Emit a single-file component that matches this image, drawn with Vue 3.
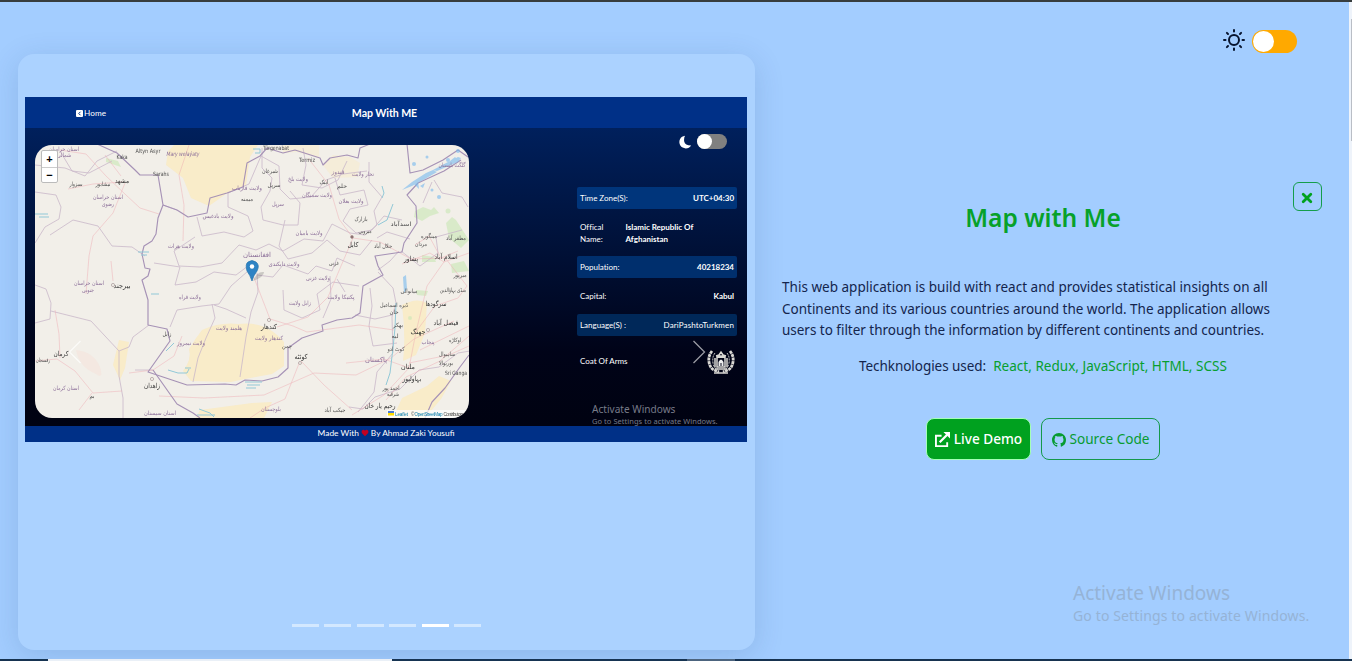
<script setup>
const technologies = 'React, Redux, JavaScript, HTML, SCSS'
const slides = [0, 1, 2, 3, 4, 5]
const activeSlide = 4

const facts = [
  { label: 'Time Zone(S):', value: 'UTC+04:30', kind: 'shade first' },
  { label: 'Offical Name:', value: 'Islamic Republic Of Afghanistan', kind: 'name' },
  { label: 'Population:', value: '40218234', kind: 'shade second' },
  { label: 'Capital:', value: 'Kabul', kind: 'capital' },
  { label: 'Language(S) :', value: 'DariPashtoTurkmen', kind: 'shade third light' },
]

// Map labels: text, centre x, baseline y, width, colour group
const labels = [
  ['استان خراسان', 64, 151, 30, 'p'], ['شمالی', 64, 157, 14, 'p'],
  ['Kaka', 122, 159, 11, 'd'], ['Altyn Asyr', 148, 153, 25, 'd'],
  ['Mary welaýaty', 183, 156, 33, 'p i'], ['Sarahs', 161, 176, 16, 'd'],
  ['سبزوار', 76, 186, 13, 'd'], ['نیشابور', 103, 186, 15, 'd'],
  ['مشهد', 122, 183, 14, 'k'], ['استان خراسان', 108, 199, 30, 'p'],
  ['رضوی', 108, 206, 12, 'p'], ['ولایت بادغیس', 218, 218, 31, 'p'],
  ['ولایت هرات', 181, 248, 26, 'p'], ['Türgenabat', 276, 149.5, 26, 'd'],
  ['Termiz', 307, 162, 16, 'd'], ['شبرغان', 270, 173, 16, 'd'],
  ['ولایت فاریاب', 247, 190, 30, 'p'], ['میمنه', 247, 201, 12, 'd'],
  ['سرپل', 274, 187, 13, 'd'], ['سرپل', 278, 206, 12, 'p'],
  ['ولایت بلخ', 298, 181, 20, 'p'], ['ایبک', 324, 184, 9, 'd'],
  ['خلم', 342, 188, 10, 'd'], ['قندوز', 338, 174, 13, 'p'],
  ['تخار ولایت', 363, 176, 22, 'p'], ['ولایت سمنگان', 317, 197, 30, 'p'],
  ['ولایت بغلان', 351, 203, 25, 'p'], ['بازارک', 361, 221, 13, 'd'],
  ['میرویی', 365, 233, 13, 'd'], ['کابل', 353, 247, 11, 'k'],
  ['جلال آباد', 383, 248, 18, 'd'], ['اسدآباد', 401, 226, 21, 'd'],
  ['ولایت بامیان', 309, 235, 27, 'p'], ['افغانستان', 257, 257, 28, 'p b'],
  ['ولایت دایکندی', 284, 266, 31, 'p'], ['غزنی', 334, 265, 10, 'd'],
  ['مینگوره', 429, 238, 16, 'd'], ['مردان', 421, 246, 12, 'd'],
  ['پشاور', 411, 261, 14, 'k'], ['اسلام آباد', 446, 259, 23, 'k'],
  ['مظفر آباد', 456, 240, 20, 'd'], ['گلگت بلتستان', 452, 167, 27, 'p'],
  ['استان خراسان', 89, 285, 30, 'p'], ['جنوبی', 88, 292, 12, 'p'],
  ['بیرجند', 122, 288, 17, 'k'], ['ولایت فراه', 190, 299, 22, 'p'],
  ['زابل', 167, 336, 9, 'd'], ['ولایت نیمروز', 191, 345, 28, 'p'],
  ['هلمند ولایت', 229, 330, 26, 'p'], ['کندهار', 269, 329, 16, 'k'],
  ['کندهار ولایت', 269, 340, 28, 'p'], ['چمن', 287, 348, 10, 'd'],
  ['کوئٹه', 301, 359, 13, 'k'], ['ولایت غزنی', 318, 280, 24, 'p'],
  ['زابل ولایت', 300, 305, 22, 'p'], ['پکتیکا ولایت', 341, 299, 27, 'p'],
  ['میانوالی', 409, 293, 17, 'd'], ['ڈیره اسماعیل', 394, 307, 28, 'd'],
  ['خان', 394, 314, 9, 'd'], ['بھکر', 398, 327, 10, 'd'],
  ['لیه', 395, 338, 7, 'd'], ['کوٹ ادو', 396, 351, 17, 'd'],
  ['سرگودها', 436, 306, 21, 'k'], ['جھنگ', 418, 334, 15, 'k'],
  ['فیصل آباد', 446, 325, 25, 'k'], ['پنجاب', 428, 344, 13, 'p'],
  ['اوکاڑه', 455, 342, 12, 'd'], ['ساہیوال', 447, 356, 16, 'd'],
  ['بوریوالا', 446, 365, 14, 'd'], ['پاکستان', 376, 362, 22, 'p b'],
  ['ملتان', 408, 369, 14, 'k'], ['بہاولپور', 412, 381, 19, 'k'],
  ['احمد پور', 391, 390, 17, 'd'], ['شرقیه', 393, 396, 12, 'd'],
  ['Sri Ganga', 456, 375, 22, 'd'], ['رحیم یار خان', 380, 408, 31, 'k'],
  ['منڈی بہاؤالدین', 453, 292, 26, 'd'], ['میرپور', 460, 277, 13, 'd'],
  ['کرمان', 61, 356, 15, 'k'], ['رفسنجان', 43, 362, 14, 'd'],
  ['بم', 92, 398, 5, 'd'], ['استان کرمان', 66, 390, 26, 'p'],
  ['زاهدان', 152, 388, 16, 'k'], ['استان سیستان', 160, 415, 32, 'p'],
  ['بلوچستان', 271, 411, 20, 'p'], ['جیکب آباد', 335, 412, 21, 'd'],
]
</script>

<template>
  <div class="page">
    <main class="layout">
      <section class="card">
        <div class="shot">
          <header class="shot-bar">
            <span class="home">
              <svg viewBox="0 0 14 14"><rect width="14" height="14" rx="2" fill="#fff" /><path d="M9 3.500 5.500 7 9 10.500" fill="none" stroke="#003087" stroke-width="2" /></svg>Home
            </span>
            <strong>Map With ME</strong>
          </header>
          <div class="shot-body">
            <svg class="map" viewBox="35 145 434 273">
              <rect x="35" y="145" width="434" height="273" fill="#f2efe9" />
              <g fill="#fbeabd" opacity=".72">
                <path d="M174 145h84l-8 12-4 28-20 9-17 12-18-8-8-20-17-13 2-14z" />
                <path d="M283 145h36v13l-22-6-14 1zM323 165l10-10 17 2 10 6-3 14-24 1z" opacity=".5" />
                <path d="M202 330q18-8 36-6 28-4 46 18v24l-12 8-27 5-14 3-40-1-8-10q9-12 6-22 6-10 13-19z" />
                <path d="M119 340l10 2-4 26-5 12-7-15zM402 305q15-8 25-2l-2 30-9 22-13 6q3-25-1-56zM402 398l25-12 12-10 12 5-10 18-16 19h-32zM200 410l52-7 20-1-8 16h-68z" />
              </g>
              <g fill="#c9e7b5" opacity=".6">
                <path d="m106 158 12 3 3 6-15-5zM415 211l8-4 8 3 3-3 5 6-9 3-8 5-8-4zM422 255l12 2 2 5-14 0zM416 290l12 1-2 5-9-1zM446 223l6-6 4 3 13 20-8 8-12-10zM451 264l13-3 5 10-17 2z" />
                <circle cx="448" cy="211" r="2.500" /><circle cx="410" cy="318" r="2" />
              </g>
              <path d="M76 350q18 2 24 17 4 13-4 7-17-7-20-24z" fill="#f6dfd7" opacity=".45" />
              <g fill="none" stroke="#c9b8c9" stroke-width=".8" stroke-linejoin="round">
                <path d="M35 165l30 3 20 8 12-15 20-10M35 192l21 3 5 12-2 12-14 8-10 16M50 235l23-15 25 6 14 20 20 1 13 9M60 151l12 20 17 2 23-12" />
                <path d="M35 285l11 4 5 14-1 16-15 4M51 311l40 10 28 30 0 25 4 22v20M119 351l10-4 4-10 16-12M135 370l18 0" />
                <path d="M163 205l14 5M197 217l5 19 22-4 20 5 9-6-5-15-20-9v-14l21-9 12-28 18 10 1 23 10 10 21-2 15-17 17-6 24-3" />
                <path d="M262 148l0 20 10 10-2 13-9 16 2 13 20 5 15 0 2-22-10-12M303 148l3 17-4 20 20 3 16-8 9-19M335 178l5 17 24-5 4 15-18 4-7 12 13 12 16-3 12-14 18 4" />
                <path d="M369 162l0 20 13 15-8 14 3 14-12 10-15-2-18-9-9 17-19-2-21 12-14-7-13 6-17-5-17 18-22 4-21-1-5-15 21-14M285 220l-6 26 9 13 24-6 15-13 13 11 20 4 12-15" />
                <path d="M154 263l26 4-5 18 21-3 18-10 22 3 16-12M170 327l7-17 25-4 17-2 12-18 17-15M212 304l3 14-9 20-8 20-5 24M240 377l6-40 5-25 7-20-1-19M246 318l-20-9-12-4M257 275l16 2 10-12 25 9 8-8 16 5 5-13 18 8M283 290l1 20 18 8 18-8-3-16 16-12 26 4M323 318l8-19-1-23M345 292l-8-13M378 270l12-9 9-10M378 272l15 16 3 15-4 14 1 36-16 19-3 20-16 20M370 288l2 18-3 20 4 20 24-3" />
                <path d="M434 180l8 13 20 4 6 10M432 182l-9 21M410 239l-23-7-10 6M401 251l19 15 18-13-2-16 26-7M355 315l20 4 17-4M349 407l14 2 12-12 25-8 19-19 20-3 19-14 12-2" />
              </g>
              <g fill="none" stroke="#eeaab1" stroke-width=".65" opacity=".7">
                <path d="M60 150l26 4 20 22 20 19 14 13 19 6M68 189l25-5 30-2M125 183l-12 30-20 23-4 20-3 38M105 155l16 21M189 145l-10 30 5 30-1 36M35 361l22-2 18 12 18 22 29-2M55 310l4 24 1 24M92 393l-13 17M113 281l-2-20M153 370l21-14 8-20M153 370l-24 3M159 396l45 2 60-3 50-22 42 2 35-17 23-19 40-18M300 361l-15 38-20 9-15 10M301 361l23 24 28 25" />
                <path d="M253 275l17 44 23 7 14 6 52-7 35 5M353 238l-12 28-13 31-20 20-31 10M353 238l27 4 31 17 35-1M353 238l-14-19-10-34-21-27M446 259l-19 27-11 46-7 36-25 27-32 20M446 259l21 27-9 12-23 8-20 27M409 363l40-8 20-9M409 368l-25-9-38 4M420 350l49-24M386 400l20-23 34-16 29-25M402 264l28-11 14 9 25-9M415 245l14-9 12 22 17-7" />
              </g>
              <g fill="none" stroke="#a692b6" stroke-width="1.150" stroke-linejoin="round">
                <path d="M97 144l20 9 18 17 5 5 18 0 2 12 3 18-5 13-2 16-4 7-8 5-2 8 3 14 5 1-2 7-6 4 6 20v25l19 4 3 12-22 31 39 13 38-1 11 1 9-5 17 1 16-4 10-9v-20l14-10 21-7-1-6 15-5 15-2 8-5 3-27 20-11-5-9-3-10 27-4 2-9 13-20-1-17-9-11 11-12 26-12 17-11" />
                <path d="M163 205l14 5 11 7 19-4 3-15 17-5 16-6 4-24 13-7 7-8 16 5 12-3 25 8 3 7 7-7 17-3 11 3 2-10 10-4M407 144l3 29 13-3 20-10 15-10 10 7M153 370l12 17 12 17 16 9 7 5M469 355l-9 12-15 21-13 14-7 16" />
              </g>
              <g fill="none" stroke="#91c8d7" stroke-width="1">
                <path d="M35 214h13M39 217h10M138 252h11M141 255h6M168 370l10 3h9l2-4M185 368h6M245 382h17M247 385h13M246 388h10M199 409l11 4 4 4M197 415h18M396 303l-1 25-2 20-3 25-4 12M382 186l2 7-2 5M378 225l9-5 6-16M151 294h8M174 343l-8 8M253 149h7v4h-5" />
              </g>
              <g fill="#75b8ee" opacity=".6">
                <path d="M402 190l10-8 14-9 7-3 4 2-12 7-13 7zM433 170l15-8 10-5 3 1-3 4-21 9zM414 184l4-3 1 8zM403 277l3-2 1 14-3 4zM420 186l5-3-2 5zM450 161l5-4 2 2z" />
                <circle cx="414" cy="164" r="2" /><circle cx="427" cy="157" r="1.500" /><circle cx="458" cy="151" r="2" /><circle cx="432" cy="190" r="1.500" /><circle cx="439" cy="197" r="2" /><circle cx="448" cy="160" r="2" />
              </g>
              <g class="labels">
                <text v-for="(l, i) in labels" :key="i" :x="l[1]" :y="l[2]" :class="l[4]" :textLength="l[3]" lengthAdjust="spacingAndGlyphs">{{ l[0] }}</text>
              </g>
              <g fill="#f2efe9" stroke="#9b8a8a" stroke-width=".6">
                <circle cx="113" cy="285" r="1.600" /><circle cx="269" cy="320" r="1.600" /><circle cx="152" cy="379" r="1.600" /><circle cx="428" cy="330" r="1.600" /><circle cx="352" cy="237" r="1.400" fill="#8b6969" /><circle cx="300" cy="363" r="1.500" />
              </g>
              <path d="M253 281q4-10 11-9 0 5-11 9z" fill="#555" opacity=".25" />
              <path d="M252 281q-2-6-5-10-2-7 1-9 4-3 8 0 4 3 1 9-4 5-5 10z" fill="#2e83c4" stroke="#2473ac" stroke-width=".7" />
              <circle cx="252" cy="266.500" r="2.200" fill="#fff" />
              <rect x="387" y="410" width="82" height="8" fill="#fff" opacity=".7" />
              <path d="M388 411h6v2h-6z" fill="#4b7bd5" /><path d="M388 413h6v2.500h-6z" fill="#fd0" />
              <g class="credit">
                <text x="395" y="415.500" textLength="13" fill="#0078a8">Leaflet</text>
                <text x="411" y="415.500">©</text>
                <text x="414.500" y="415.500" textLength="28" fill="#0078a8">OpenStreetMap</text>
                <text x="443.500" y="415.500" textLength="20">Contributors</text>
              </g>
            </svg>
            <div class="zoom"><span>+</span><span>−</span></div>
            <aside class="info">
              <div class="night">
                <svg viewBox="0 0 16 16"><path d="M8 .8A7.300 7.300 0 1 0 15 12Q8 12 7 7 6.700 3 8 .8z" fill="#fff" /></svg>
                <span class="mini-switch"><i></i></span>
              </div>
              <div v-for="f in facts" :key="f.label" class="fact" :class="f.kind">
                <span class="key">{{ f.label }}</span><b>{{ f.value }}</b>
              </div>
              <div class="fact arms">
                <span>Coat Of Arms</span>
                <svg viewBox="0 0 28 28" fill="none" stroke="#d9d8d4">
                  <path d="M5 3Q1 8 2 14t5 8l5 2M23 3q4 5 3 11t-5 8l-5 2" stroke-width="2.800" stroke-dasharray="3 .6" />
                  <path d="M8 5Q5 9 6 15t5 6M20 5q3 4 2 10t-5 6" stroke-width="1" stroke-dasharray="2 1" />
                  <path d="M9 8l3-1 2-3 2 3 3 1M10 8v11h8V8zM8 10v9M20 10v9M8 21h12M7 25h14" stroke-width="1.500" />
                  <path d="M11.500 18v-4q2.500-5 5 0v4h-2v-3h-1v3z" fill="#eee" stroke="none" /><path d="M10 9h8" stroke-width="2" />
                </svg>
              </div>
              <div class="mini-mark"><p>Activate Windows</p><small>Go to Settings to activate Windows.</small></div>
            </aside>
          </div>
          <footer class="shot-foot">
            <span>Made With</span>
            <svg viewBox="0 0 10 10"><path d="M5 9 1 5Q0 2 2 1.200 4 .6 5 2.300 6 .6 8 1.200 10 2 9 5z" fill="#c3001f" /></svg>
            <span>By Ahmad Zaki Yousufi</span>
          </footer>
        </div>
        <div class="dots"><span v-for="s in slides" :key="s" :class="{ active: s === activeSlide }"></span></div>
        <svg class="arrow prev" viewBox="0 0 14 24"><path d="M12.500 1 1.500 12l11 11" /></svg>
        <svg class="arrow next" viewBox="0 0 14 24"><path d="m1.500 1 11 11-11 11" /></svg>
      </section>

      <section class="details">
        <div class="theme">
          <svg viewBox="0 0 24 24" fill="none" stroke="#07142f" stroke-width="2"><circle cx="12" cy="12" r="5" /><path stroke-linecap="round" d="M12 2v1.500M12 20.500V22M2 12h1.500M20.500 12H22M4.900 4.900 6 6M18 18l1.100 1.100M4.900 19.100 6 18M18 6l1.100-1.100" /></svg>
          <span class="switch"><i></i></span>
        </div>
        <button class="close" aria-label="Close"><svg viewBox="0 0 12 12"><path d="m2.200 2.200 7.600 7.600m0-7.600-7.600 7.600" stroke="#00a11f" stroke-width="2.800" stroke-linecap="round" /></svg></button>
        <h1>Map with Me</h1>
        <p class="about">
          <span class="l1">This web application is build with react and provides statistical insights on all</span>
          <span class="l2">Continents and its various countries around the world. The application allows</span>
          <span class="l3">users to filter through the information by different continents and countries.</span>
        </p>
        <p class="tech"><span class="used">Techknologies used:</span><span class="list">{{ technologies }}</span></p>
        <div class="actions">
          <button class="demo">
            <svg viewBox="0 0 16 16" fill="none" stroke="#fff" stroke-width="2"><path d="M7 4H1v11h12v-4" /><path d="M5 11 13 3" stroke-width="2.400" /><path d="M9 0h7v7z" fill="#fff" stroke="none" /></svg>
            <span>Live Demo</span>
          </button>
          <button class="source">
            <svg viewBox="0 0 16 16"><path fill="#079b32" d="M8 0C3.580 0 0 3.580 0 8c0 3.540 2.290 6.530 5.470 7.590.4.070.550-.170.550-.380 0-.190-.010-.820-.010-1.490-2.010.370-2.530-.490-2.690-.940-.090-.230-.480-.940-.820-1.130-.280-.150-.680-.520-.010-.530.630-.010 1.080.580 1.230.820.720 1.210 1.870.870 2.330.660.070-.520.280-.870.510-1.070-1.780-.2-3.640-.890-3.640-3.950 0-.870.310-1.590.820-2.150-.080-.2-.360-1.020.080-2.120 0 0 .670-.210 2.200.820.640-.180 1.320-.270 2-.270s1.360.090 2 .270c1.530-1.040 2.200-.820 2.200-.820.440 1.100.160 1.920.080 2.120.510.560.820 1.270.820 2.150 0 3.070-1.870 3.750-3.650 3.950.290.250.540.730.540 1.480 0 1.070-.010 1.930-.010 2.200 0 .210.150.460.550.380A8.010 8.010 0 0 0 16 8c0-4.420-3.580-8-8-8z" /></svg>
            <span>Source Code</span>
          </button>
        </div>
      </section>
    </main>
    <div class="scroll"><i></i></div>
    <div class="mark"><p>Activate Windows</p><small>Go to Settings to activate Windows.</small></div>
    <div class="taskbar"><i class="window"></i><i class="tab"></i></div>
  </div>
</template>

<style>
body { margin: 0; overflow: hidden; }
</style>

<style scoped>
* { box-sizing: border-box; }
p, h1 { margin: 0; }
button { padding: 0; font: inherit; background: none; }
svg { display: block; flex: none; }
.page { position: relative; width: 1352px; height: 661px; overflow: hidden; background: #a3cdff; border-top: 2px solid #373d3e; font-family: "Noto Sans", "Open Sans", sans-serif; color: #14254d; }
.layout { display: flex; height: 657px; padding: 52px 0 9px 18px; }
.card { position: relative; width: 737px; height: 596px; flex: none; padding: 43px 7px 0; border-radius: 16px; background: #abd2ff; box-shadow: 0 6px 30px rgba(31, 70, 120, .16); }
.shot { width: 722px; height: 345px; font-family: Lato, sans-serif; color: #fff; font-size: 8px; }
.shot-bar { position: relative; height: 31px; display: flex; align-items: center; justify-content: center; background: #003087; font-size: 10.600px; letter-spacing: -.08px; padding-right: 3px; }
.shot-bar strong { font-weight: 700; }
.home { position: absolute; left: 51px; top: 11px; display: flex; align-items: center; gap: 1px; font-size: 8.200px; line-height: 11px; letter-spacing: .1px; }
.home svg { width: 7px; height: 7px; }
.shot-body { position: relative; display: flex; justify-content: space-between; height: 298px; background: linear-gradient(#00205c 0, #00133d 34%, #000318 75%, #000211); }
.map { width: 434px; height: 273px; margin: 17px 0 0 10px; border-radius: 17px; }
.labels { font-family: "DejaVu Sans", "Noto Sans", sans-serif; font-size: 5.800px; text-anchor: middle; }
.p { fill: #8c6f99; }
.d { fill: #505050; }
.k { fill: #333; font-size: 6.800px; }
.b { font-size: 6.800px; }
.i { font-style: italic; }
.credit { font-family: "Liberation Sans", sans-serif; font-size: 4.600px; fill: #444; }
.zoom { position: absolute; left: 16px; top: 22px; width: 17px; height: 33px; border: 1px solid #bbb; border-radius: 2px; background: #fff; display: flex; flex-direction: column; color: #000; font: bold 11px/16px "Liberation Sans", sans-serif; text-align: center; }
.zoom span { height: 16px; }
.zoom span + span { border-top: 1px solid #ccc; line-height: 14px; }
.info { width: 160px; margin-right: 10px; padding-top: 6px; }
.night { display: flex; align-items: center; justify-content: flex-end; gap: 5px; height: 15px; margin: 0 10px 38px 0; }
.night svg { width: 14px; height: 14px; margin-top: 1px; }
.mini-switch { width: 30px; height: 15px; border-radius: 8px; background: #808080; }
.mini-switch i { display: block; width: 15px; height: 15px; border-radius: 50%; background: #fff; }
.fact { display: flex; align-items: center; justify-content: space-between; padding: 0 3px; height: 22px; line-height: 12px; letter-spacing: -.02px; }
.shade { border-radius: 2px; background: #002f6d; }
.first { background: #00357b; }
.third { background: #002859; }
.light b { font-weight: 400; letter-spacing: .13px; }
.name { height: 47px; justify-content: flex-start; }
.name .key { width: 45.500px; padding-right: 15px; }
.name b { width: 78px; }
.capital { height: 36px; }
.arms { height: 50px; }
.arms svg { width: 28px; height: 28px; margin-right: -1px; margin-top: 2px; }
.mini-mark { margin: 17px 0 0 15px; white-space: nowrap; font-family: "Noto Sans", sans-serif; color: #777b89; }
.mini-mark p { font-size: 10.100px; line-height: 13px; }
.mini-mark small { display: block; font-size: 7.500px; line-height: 11px; letter-spacing: .04px; }
.shot-foot { display: flex; align-items: center; justify-content: center; height: 16px; background: #003087; font-size: 8.400px; gap: 2px; padding-bottom: 2px; }
.shot-foot svg { width: 8px; height: 8px; margin-top: -1px; }
.dots { display: flex; justify-content: center; gap: 5.400px; margin-top: 182px; }
.dots span { width: 27px; height: 3px; background: #d3e8ff; }
.dots .active { background: #fff; }
.arrow { position: absolute; width: 14px; height: 24px; fill: none; stroke: #fff; stroke-width: 1.300; }
.prev { left: 50px; top: 286px; opacity: .7; }
.next { left: 674px; top: 286px; opacity: .6; }
.details { position: relative; width: 594px; padding-left: 27px; }
.theme { position: absolute; left: 467px; top: -27px; display: flex; align-items: center; gap: 6px; }
.theme svg { width: 24px; height: 24px; margin-top: -1px; }
.switch { width: 45px; height: 23px; padding: 1px; border-radius: 12px; background: #ffa900; margin-top: 3px; }
.switch i { display: block; width: 21px; height: 21px; border-radius: 50%; background: #fff; }
.close { position: absolute; left: 538px; top: 128px; width: 29px; height: 29px; border: 1px solid #149d4b; border-radius: 6px; display: grid; place-items: center; }
.close svg { width: 12px; height: 12px; margin-top: 3px; margin-right: 1px; }
h1 { width: 522px; margin-top: 146px; text-align: center; color: #07a12a; font-size: 24.600px; line-height: 36px; font-weight: 600; white-space: nowrap; }
.about { margin-top: 41px; font-size: 13.500px; line-height: 21.500px; }
.about span { display: block; white-space: nowrap; width: max-content; }
.l1 { letter-spacing: .015px; }
.l2 { letter-spacing: -.01px; }
.l3 { letter-spacing: -.025px; }
.tech { display: flex; gap: 7px; margin: 13.300px 0 0 77px; font-size: 13.500px; line-height: 22px; white-space: nowrap; }
.used { letter-spacing: -.05px; }
.list { color: #079f2f; letter-spacing: .03px; }
.actions { display: flex; gap: 10px; margin: 41px 0 0 144px; }
.actions button { height: 42px; display: flex; align-items: center; justify-content: center; gap: 4px; border-radius: 8px; font-size: 13.600px; white-space: nowrap; }
.demo { width: 105px; border: 1px solid #a5ffb8; background: #00a11f; color: #fff; font-weight: 500; }
.demo svg { width: 15px; height: 15px; margin-top: 2px; }
.source { width: 119px; border: 1px solid #14994b; color: #079b32; }
.source svg { width: 14px; height: 14px; margin-top: 2px; }
.mark { position: absolute; left: 1073px; top: 578px; color: #95b3d6; white-space: nowrap; }
.mark p { font-size: 19px; line-height: 26px; }
.mark small { display: block; font-size: 14px; line-height: 19px; letter-spacing: .13px; }
.scroll { position: absolute; right: 0; top: 0; width: 3px; height: 657px; background: #eef3fa; }
.scroll i { display: block; margin: 17px 0 0 2px; height: 122px; background: #b9bec6; }
.taskbar { display: flex; height: 2px; background: #173350; padding-left: 48px; }
.window { width: 344px; background: #f8fbff; }
.tab { width: 48px; margin-left: 295px; background: #50677f; }
</style>
